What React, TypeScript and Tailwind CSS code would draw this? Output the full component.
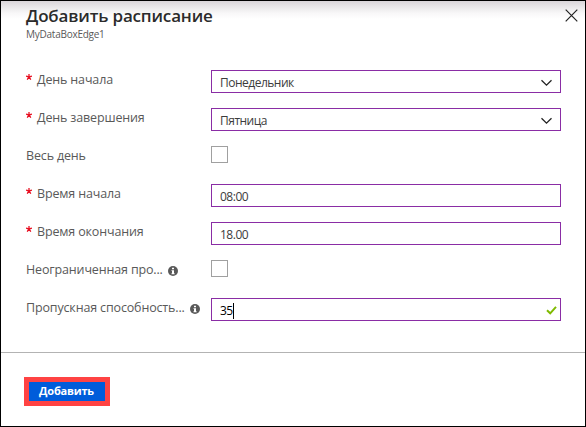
import type { ReactNode } from 'react';

function Label({ children, required, info }: { children: ReactNode; required?: boolean; info?: boolean }) {
  return (
    <div className="flex h-[19px] w-[185px] shrink-0 items-center whitespace-nowrap text-[12.5px] leading-[19px] tracking-[-0.15px] text-[#595959]">
      {required && (
        <svg className="mb-[5px] mr-[5px] shrink-0" width="6" height="6" viewBox="0 0 6 6" fill="none" stroke="#e81123" strokeWidth="1.3">
          <path d="M3 0v3M0 2.200l3 .8 3-.8M1.200 5.700 3 3l1.800 2.700" />
        </svg>
      )}
      <span>{children}</span>
      {info && (
        <svg className="ml-[5px] mt-[3px] shrink-0" width="10" height="10" viewBox="0 0 10 10">
          <circle cx="5" cy="5" r="5" fill="#595959" />
          <path d="M4 1.800h2v1.500H4zM3.500 4.200H6v3h.6v1H3.500v-1H4V5.100h-.5z" fill="#fff" />
        </svg>
      )}
    </div>
  );
}

function Row({ label, children }: { label: ReactNode; children: ReactNode }) {
  return (
    <div className="flex h-[38px] items-start">
      {label}
      {children}
    </div>
  );
}

function Field({ children, icon }: { children: ReactNode; icon?: ReactNode }) {
  return (
    <div className="flex h-[23px] w-[350px] items-center justify-between border border-[#8a2da5] bg-white pl-[8px] text-[12px] leading-[21px] tracking-[-0.5px] text-[#3c3c3c]">
      <span className="flex items-center pt-[2px]">{children}</span>
      {icon}
    </div>
  );
}

function Chevron() {
  return (
    <svg className="mr-[8px] mt-[2px]" width="11" height="8" viewBox="0 0 11 8" fill="none" stroke="#222" strokeWidth="1.3">
      <path d="M.5 1.200 5.500 6.200 10.500 1.200" />
    </svg>
  );
}

function Checkbox() {
  return <div className="h-[17px] w-[17px] border border-[#a0a0a0] bg-white" />;
}

export default function App() {
  return (
    <div className="flex h-[427px] w-[586px] flex-col overflow-hidden border border-black bg-white font-['Open_Sans','Noto_Sans',sans-serif]">
      <header className="flex h-[69px] shrink-0 justify-between bg-[linear-gradient(to_bottom,#d9d5d9_0px,#e9e7e9_6px,#f8f7f8_12px,#ffffff_18px)] pl-[25px] pr-[7px]">
        <div>
          <h1 className="mt-[3px] h-[23px] whitespace-nowrap text-[17px] font-semibold leading-[24px] tracking-[-0.17px] text-[#2b2b2b]">Добавить расписание</h1>
          <p className="whitespace-nowrap text-[10px] leading-[14px] tracking-[-0.25px] text-[#595959]">MyDataBoxEdge1</p>
        </div>
        <svg className="mt-[8px]" width="13" height="13" viewBox="0 0 13 13" stroke="#222" strokeWidth="1.200">
          <path d="M.7.7l11.600 11.600M12.300.7L.7 12.300" />
        </svg>
      </header>
      <main className="h-[282px] shrink-0 pl-[25px]">
        <Row label={<Label required>День начала</Label>}><Field icon={<Chevron />}>Понедельник</Field></Row>
        <Row label={<Label required>День завершения</Label>}><Field icon={<Chevron />}>Пятница</Field></Row>
        <Row label={<Label>Весь день</Label>}><Checkbox /></Row>
        <Row label={<Label required>Время начала</Label>}><Field>08:00</Field></Row>
        <Row label={<Label required>Время окончания</Label>}><Field>18.00</Field></Row>
        <Row label={<Label info>Неограниченная про...</Label>}><Checkbox /></Row>
        <Row label={<Label info>Пропускная способность...</Label>}>
          <Field icon={
            <svg className="mr-[3px] mt-[2px]" width="11" height="9" viewBox="0 0 11 9" fill="none" stroke="#7fba00" strokeWidth="2">
              <path d="M1 4.300 4.200 7.300 10 .8" />
            </svg>
          }>
            <span className="text-black">35</span><span className="h-[16px] w-px bg-black" />
          </Field>
        </Row>
      </main>
      <footer className="grow border-t border-[#b3b3b3] pl-[23px] pt-[24px]">
        <button className="flex h-[29px] w-[86px] items-center justify-center whitespace-nowrap border-[5px] border-[#ff4343] bg-[#005cda] pb-[2px] pr-[1px] text-[11px] font-bold leading-[17px] tracking-[-0.2px] text-white">Добавить</button>
      </footer>
    </div>
  );
}
